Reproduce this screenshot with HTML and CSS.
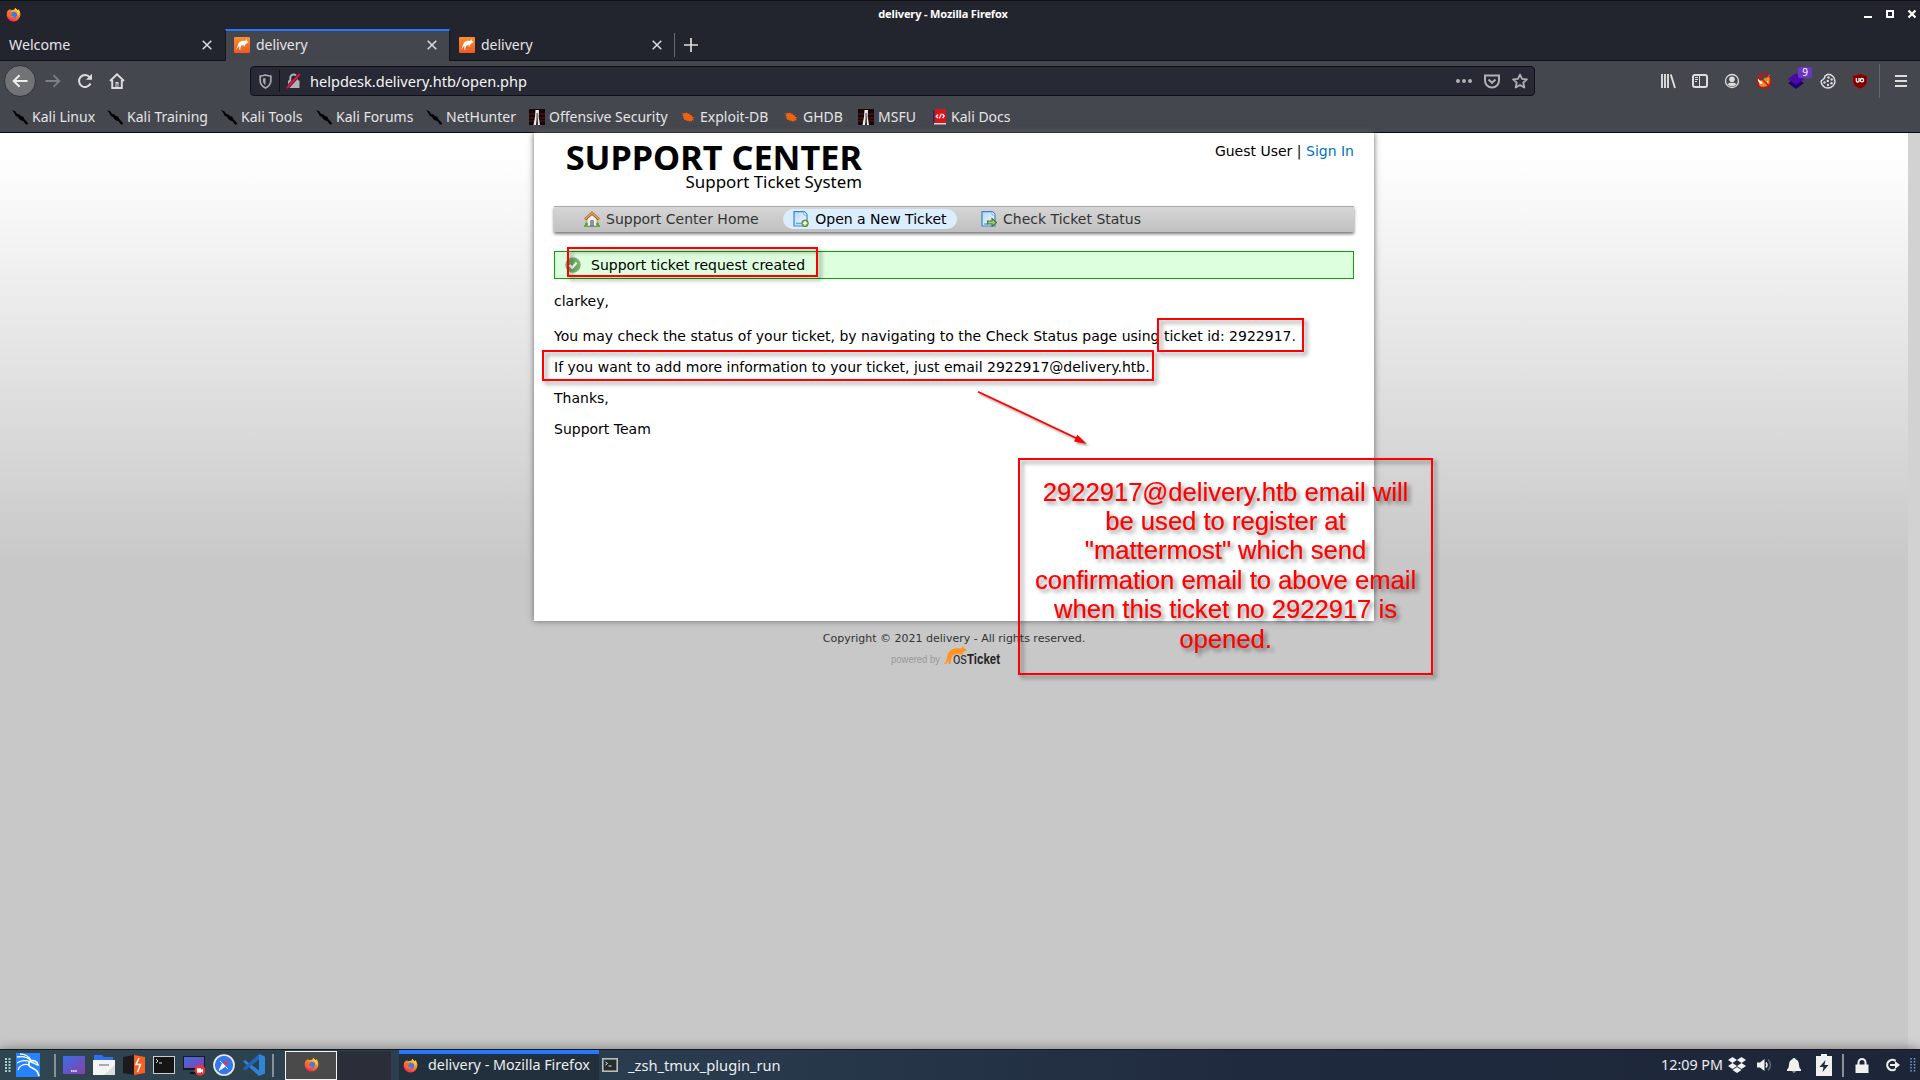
FILE: index.html
```html
<!DOCTYPE html>
<html lang="en">
<head>
<meta charset="utf-8">
<title>delivery - Mozilla Firefox</title>
<link rel="stylesheet" href="styles.css">
</head>
<body>
<svg class="defs" aria-hidden="true">
  <defs>
    <linearGradient id="flame" x1="0.8" y1="0" x2="0.3" y2="1"><stop offset="0" stop-color="#ffe34a"/><stop offset=".45" stop-color="#ff8a25"/><stop offset="1" stop-color="#f5225c"/></linearGradient>
    <linearGradient id="orange" x1="0" y1="0" x2="0" y2="1"><stop offset="0" stop-color="#fb8f2c"/><stop offset="1" stop-color="#ee5a22"/></linearGradient>
    <linearGradient id="desk" x1="0" y1="0" x2="1" y2="1"><stop offset="0" stop-color="#3b6fe4"/><stop offset="1" stop-color="#8a3ea8"/></linearGradient>
    <linearGradient id="sheet" x1="0" y1="0" x2="1" y2="1"><stop offset="0" stop-color="#b5d8f8"/><stop offset="1" stop-color="#f4faff"/></linearGradient>
    <symbol id="firefox" viewBox="0 0 16 16">
      <path d="M8.6 3.2 10 .8c.6 1.4 1.6 2 2.6 3l.6-1.6c1.700 2 2.300 4.100 2.100 6.400A7.300 7.300 0 0 1 .8 9.200C.5 6.800 1.200 4.600 2.600 2.900l.5 1.200L4.300 1.800 5 3.600c1.200-.6 2.400-.7 3.600-.4z" fill="url(#flame)"/>
      <path d="M5 5.600 8.500 5l3 1.200.3 3.200-2 2.300-3 .1-2-2z" fill="#347df0"/>
      <path d="M2.500 5c2-.6 3 .8 5 .8L6 7.600l-1 .3c.6 2 2.600 2.300 4.200 1.200-.6 2.400-4 3.600-6 1.200z" fill="#fb6a2b"/>
      <path d="M9.500.9c.1 2.500 3.800 3.800 2.900 8C15 6.500 14 4 12.600 3.800z" fill="#ffcc3c"/>
    </symbol>
    <symbol id="roo" viewBox="0 0 16 16">
      <rect width="16" height="16" rx="1" fill="url(#orange)"/>
      <path d="M1.600 13.500C3.400 11 3.500 8 5 5.800 6.600 3.900 9 3.500 11 3.900L12.600 2l.3 1.700 1.700 1.600-1.800.7-1.600 1.800-.8 1.700-.9-.2.200-1.400-2.300.6-1.300 3.300 1.100.8-2-.1.200-3.400C4 10 3 12 1.600 13.500z" fill="#fff"/>
    </symbol>
    <symbol id="close" viewBox="0 0 10 10"><path d="M.7.7 9.300 9.300M9.300.7.7 9.300" stroke="#ddd" stroke-width="1.500"/></symbol>
    <symbol id="kali" viewBox="0 0 16 16"><path d="M0 1 3.500 2.500l1.500 2.300 2.600.6 1.200 1.600 2.600.8.800 2.200L16 14l-1 2-1.800-1.200-1.500-2.600-2.500-.6-2-1.500-1.200-2.200L3.800 7 2.500 4.300z" fill="#000"/></symbol>
    <symbol id="offsec" viewBox="0 0 16 16"><rect width="16" height="16" fill="#170606"/><path d="M0 5h16M0 9h16M0 12h16" stroke="#5a1717"/><path d="M6.500 1h3.500l-.3 7 1.300 8H8.800L8.300 7.500 7 16H4.500L6 8z" fill="#eee"/><path d="M7.600 4h1v12h-1z" fill="#333"/></symbol>
    <symbol id="bug" viewBox="0 0 14 14"><path d="M0 3 2.800 3.800 2.900 2.600 4 3.300 6 2.400l.8 1.300 1.700-.3.600 1.600 2 .6.200 1.300L14 7.500l-2.500.7 2 2.200-2.500-.7.300 1.800-1.700-.8-.9 1.100-1-1-2 .2-.5-1.200L3 9.900 3.300 8.700 1.500 7.800 3 6.900 1 5.200l1.500-.1z" fill="#f0620f"/></symbol>
  </defs>
</svg>

<div class="screen">
  <header class="titlebar">
    <svg class="title-fox" width="15" height="15"><use href="#firefox"/></svg>
    <span class="window-title">delivery - Mozilla Firefox</span>
    <svg class="window-buttons" width="52" height="10" viewBox="0 0 52 10"><path d="M0 8h8" stroke="#fff" stroke-width="2"/><path d="M23 2h6v6h-6z" fill="none" stroke="#fff" stroke-width="2"/><path d="m44.500 1.500 7 7M51.500 1.500l-7 7" stroke="#fff" stroke-width="2.200"/></svg>
  </header>

  <nav class="tabs">
    <div class="tab tab-plain"><span>Welcome</span><svg class="x" width="10" height="10"><use href="#close"/></svg></div>
    <div class="tab active"><svg width="16" height="16"><use href="#roo"/></svg><span>delivery</span><svg class="x" width="10" height="10"><use href="#close"/></svg></div>
    <div class="tab"><svg width="16" height="16"><use href="#roo"/></svg><span>delivery</span><svg class="x" width="10" height="10"><use href="#close"/></svg></div>
    <div class="new-tab"><svg width="14" height="14" viewBox="0 0 14 14"><path d="M7 0v14M0 7h14" stroke="#ddd" stroke-width="1.700"/></svg></div>
  </nav>

  <div class="toolbar">
    <div class="back"><svg width="16" height="14" viewBox="0 0 16 14"><path d="M15.500 7H2M7.500 1.200 1.700 7l5.800 5.800" fill="none" stroke="#eee" stroke-width="2"/></svg></div>
    <svg class="forward" width="16" height="14" viewBox="0 0 16 14"><path d="M.5 7H14M8.500 1.200 14.300 7l-5.800 5.800" fill="none" stroke="#7e8086" stroke-width="1.800"/></svg>
    <svg class="reload" width="16" height="16" viewBox="0 0 16 16"><path d="M13.500 10.500A6 6 0 1 1 12.700 4.200" fill="none" stroke="#ddd" stroke-width="2"/><path d="M15 .8v6H9z" fill="#ddd"/></svg>
    <svg class="home" width="16" height="16" viewBox="0 0 16 16"><path d="m1 8 7-6.700L15 8M3.200 7v8h9.600V7" fill="none" stroke="#ddd" stroke-width="1.900"/><path d="M6.500 9h3v6h-3z" fill="#ddd"/><path d="M7.500 10.500h1V14h-1z" fill="#444"/></svg>
    <div class="urlbar">
      <svg class="shield" width="13" height="15" viewBox="0 0 13 15"><path d="M6.500 1C4.500 1.600 3 1.900 1.200 2v4.500c0 4 2.500 6.300 5.300 7.500 2.800-1.200 5.300-3.500 5.300-7.500V2C10 1.900 8.500 1.600 6.500 1z" fill="none" stroke="#a9aab0" stroke-width="1.700"/><path d="M6.500 4v7C4.800 10 4 8.500 4 6.500v-2z" fill="#a9aab0"/></svg>
      <i class="url-rule"></i>
      <svg class="lock" width="15" height="16" viewBox="0 0 15 16"><path d="M2 7.500h11.500V15H2z" fill="#b1b2b7"/><path d="M4.300 8V4.800a3.300 3.300 0 0 1 6.600 0V8" fill="none" stroke="#b1b2b7" stroke-width="1.900"/><path d="M1 15 13.700 1" stroke="#292a35" stroke-width="3.600"/><path d="M1 15 13.700 1" stroke="#f0103c" stroke-width="2"/></svg>
      <span class="url">helpdesk.delivery.htb/open.php</span>
      <svg class="url-dots" width="16" height="4" viewBox="0 0 16 4"><g fill="#b1b1b5"><circle cx="2" cy="2" r="2"/><circle cx="8" cy="2" r="2"/><circle cx="14" cy="2" r="2"/></g></svg>
      <svg width="16" height="15" viewBox="0 0 16 15"><path d="M1 1.500h14v5a7 7 0 0 1-14 0z" fill="none" stroke="#b1b1b5" stroke-width="2"/><path d="m4.500 5.500 3.500 3.300 3.500-3.300" fill="none" stroke="#b1b1b5" stroke-width="2"/></svg>
      <svg width="16" height="16" viewBox="0 0 16 16"><path d="m8 1.500 2 4.400 4.900.5-3.600 3.300 1 4.800L8 12l-4.300 2.500 1-4.800L1.100 6.400 6 5.900z" fill="none" stroke="#b1b1b5" stroke-width="1.800" stroke-linejoin="round"/></svg>
    </div>
    <div class="extensions">
      <svg width="16" height="16" viewBox="0 0 16 16"><path d="M2 1v14M5 1v14M8 1v14M10.800 1.500 15 15" stroke="#ddd" stroke-width="1.900"/></svg>
      <svg width="16" height="16" viewBox="0 0 16 16"><rect x="1" y="2" width="14" height="12" rx="2" fill="none" stroke="#ddd" stroke-width="2"/><path d="M7.500 2v12" stroke="#ddd"/><path d="M3 4.500h3M3 6.500h3M3 8.500h2" stroke="#ddd"/></svg>
      <svg width="16" height="16" viewBox="0 0 16 16"><circle cx="8" cy="8" r="6.500" fill="none" stroke="#ddd" stroke-width="1.300"/><circle cx="8" cy="6.300" r="2.800" fill="#ddd"/><path d="M3.500 11c1.300-1 2-1.300 4.500-1.300s3.200.3 4.500 1.300c-2.200 2.900-6.800 2.900-9 0z" fill="#ddd"/></svg>
      <svg width="16" height="16" viewBox="0 0 16 16"><path d="M3 7.500 7 7l2-2.500 1.500.5L13 2.500l.8 3.500-.3 5-3.500 2.500-5 .5-2-2z" fill="#ee8b1c"/><path d="M1.500 5 4 8l2 1 .5 1.500-2 .5-2.500-3zM12 1.500l2 1-.5 3zM11 8l1.500.5L11 10z" fill="#fff"/><circle cx="8" cy="8" r="7.200" fill="none" stroke="#cc1212" stroke-width="1.400"/><path d="m3 3 10 10" stroke="#cc1212" stroke-width="1.400"/></svg>
      <div class="layers"><svg width="16" height="16" viewBox="0 0 16 16"><path d="m0 10 8 6 8-6-8-5z" fill="#1c0070"/><path d="m0 6 8 6 8-6-8-6z" fill="#4a0aa8"/></svg><span class="badge">9</span></div>
      <svg width="16" height="16" viewBox="0 0 16 16"><path d="M8 1.200A6.900 6.900 0 1 1 1.100 8L3 6.500 4.500 5 5 3z" fill="none" stroke="#ddd" stroke-width="1.500"/><g fill="#ddd"><circle cx="8.500" cy="4.500" r="1.200"/><circle cx="11.700" cy="6.500" r="1.200"/><circle cx="7.800" cy="8" r="1.200"/><circle cx="4.500" cy="9.500" r="1.200"/><circle cx="8" cy="12" r="1.200"/><circle cx="11.500" cy="10.300" r="1.200"/></g></svg>
      <svg width="16" height="16" viewBox="0 0 16 16"><path d="M8 .7C5.500 2 3.500 2.400 1 2.500V8c0 4 3.500 6.500 7 7.700C11.500 14.500 15 12 15 8V2.500C12.500 2.400 10.500 2 8 .7z" fill="#800000" stroke="#a22" stroke-width=".5"/><path d="M4.300 5v2.800a1.300 1.300 0 0 0 2.700 0V5" fill="none" stroke="#fff" stroke-width="1.300"/><circle cx="9.900" cy="7.200" r="1.700" fill="none" stroke="#fff" stroke-width="1.300"/></svg>
    </div>
    <i class="menu-rule"></i>
    <svg class="menu" width="12" height="14" viewBox="0 0 12 14"><path d="M0 2h12M0 7h12M0 12h12" stroke="#ddd" stroke-width="2"/></svg>
  </div>

  <div class="bookmarks">
    <a class="b1"><svg width="16" height="16"><use href="#kali"/></svg>Kali Linux</a>
    <a class="b2"><svg width="16" height="16"><use href="#kali"/></svg>Kali Training</a>
    <a class="b3"><svg width="16" height="16"><use href="#kali"/></svg>Kali Tools</a>
    <a class="b4"><svg width="16" height="16"><use href="#kali"/></svg>Kali Forums</a>
    <a class="b5"><svg width="16" height="16"><use href="#kali"/></svg>NetHunter</a>
    <a class="b6"><svg width="16" height="16"><use href="#offsec"/></svg>Offensive Security</a>
    <a class="b7"><svg width="14" height="14"><use href="#bug"/></svg>Exploit-DB</a>
    <a class="b8"><svg width="14" height="14"><use href="#bug"/></svg>GHDB</a>
    <a class="b9"><svg width="16" height="16"><use href="#offsec"/></svg>MSFU</a>
    <a class="b10"><svg width="13" height="16" viewBox="0 0 13 16"><path d="M0 1h2v14H0z" fill="#1b2c5e"/><path d="M1.500 0H13v14H1.500z" fill="#d8151b"/><path d="M1 14h12v1.500H1z" fill="#ddd"/><path d="M5 5.500 3.200 7.500 5 9M9.500 5l1.800 2-1.800 2M8.300 4.800 6.300 9.500" fill="none" stroke="#fff" stroke-width="1.200"/></svg>Kali Docs</a>
  </div>

  <div class="viewport">
    <main class="page">
      <div class="page-head">
        <div class="brand"><span class="brand-name">SUPPORT CENTER</span><span class="brand-sub">Support Ticket System</span></div>
        <div class="user">Guest User | <a>Sign In</a></div>
      </div>
      <div class="site-nav">
        <span class="item home-item"><svg width="16" height="16" viewBox="0 0 16 16"><path d="M0 14h16v2H0z" fill="#5fae45"/><path d="M3 7.500 8 3l5 4.500V15H3z" fill="#f3f1ea" stroke="#8e8a80" stroke-width=".8"/><path d="M6.500 9.500h3V15h-3z" fill="#8b98a8" stroke="#666" stroke-width=".6"/><path d="m1 8.500 7-6.300 7 6.300" fill="none" stroke="#9a5a25" stroke-width="2.800"/><path d="m1 8.300 7-6.300 7 6.300" fill="none" stroke="#e2a05c" stroke-width="1.500"/><circle cx="2.500" cy="13" r="1.600" fill="#58a83c"/><circle cx="13.500" cy="13" r="1.600" fill="#58a83c"/></svg>Support Center Home</span>
        <span class="item current"><svg width="16" height="16" viewBox="0 0 16 16"><path d="M1 .7h10.500L14 3.500V15H1z" fill="url(#sheet)" stroke="#3d82cf" stroke-width="1.200"/><path d="M11 .7V4h3" fill="#fff" stroke="#6ba4df" stroke-width=".8"/><path d="M3 12.500h5" stroke="#58a8ef" stroke-width="1.500"/><circle cx="12" cy="12.300" r="3.300" fill="#8ab35c" stroke="#527d2d" stroke-width=".9"/><path d="M12 10.300v4M10 12.300h4" stroke="#fff" stroke-width="1.400"/></svg>Open a New Ticket</span>
        <span class="item"><svg width="16" height="16" viewBox="0 0 16 16"><path d="M1 .7h10.500L14 3.500V15H1z" fill="url(#sheet)" stroke="#3d82cf" stroke-width="1.200"/><path d="M11 .7V4h3" fill="#fff" stroke="#6ba4df" stroke-width=".8"/><path d="M3 13h4" stroke="#58a8ef" stroke-width="1.500"/><path d="M6.500 10H11V7.500l4.500 4-4.500 4V13H6.500z" fill="#a1c97a" stroke="#477725" stroke-width="1.100"/></svg>Check Ticket Status</span>
      </div>
      <div class="notice"><svg width="16" height="16" viewBox="0 0 16 16"><circle cx="8" cy="8" r="7" fill="#67b35c" stroke="#8aa884" stroke-width="1.500"/><path d="m4.500 8 2.700 2.800 4.500-5.300" fill="none" stroke="#fff" stroke-width="2.200"/></svg>Support ticket request created</div>
      <div class="message">
        <p class="greeting">clarkey,</p>
        <p>You may check the status of your ticket, by navigating to the Check Status page using ticket id: 2922917.</p>
        <p>If you want to add more information to your ticket, just email 2922917@delivery.htb.</p>
        <p>Thanks,</p>
        <p>Support Team</p>
      </div>
    </main>
    <footer class="page-foot">
      <span class="copyright">Copyright © 2021 delivery - All rights reserved.</span>
      <svg class="powered" width="112" height="22" viewBox="0 0 112 22">
        <text class="pw" x="1" y="18" textLength="49" lengthAdjust="spacingAndGlyphs">powered by</text>
        <path d="M53 19.300C56.500 18 56.500 14 57.500 10.500 58.500 6.500 61.500 3.600 65.500 3.400 68 3.200 70 3.600 71.500 3.200L73 .5l.7 2.500C75 3.500 76 4.500 77 5.600 75.500 6.600 74 6.300 73 7.500L72.500 9.500 70 9.300 67 9C64.500 9 63 10 62 12 61 14 61 16 60.500 19H58.500L59.500 12.500C58.300 16 57.500 19.500 53 19.300z" fill="#ff931d"/>
        <text class="os" x="63" y="19" textLength="14" lengthAdjust="spacingAndGlyphs">os</text>
        <text class="tk" x="77" y="19" textLength="33" lengthAdjust="spacingAndGlyphs">Ticket</text>
      </svg>
    </footer>
    <div class="scrollbar"></div>
  </div>

  <footer class="taskbar">
    <svg class="grip" width="6" height="14" viewBox="0 0 6 14"><path d="M1 0v14M4.500 0v14" stroke="#9fd0d6" stroke-width="2" stroke-dasharray="2 1"/></svg>
    <svg class="kali-menu" width="24" height="24" viewBox="0 0 24 24"><rect width="24" height="24" fill="#2683fb"/><path d="M1 4c6-1 11 0 14 4M1 10c4-3 9-3 14-1 4 1 6 4 8 3M4 1c4 0 9 2 11 6M2 17c1-4 6-7 11-5" fill="none" stroke="#fff" stroke-width="1.300"/><path d="M14 8c-3 5 0 6 4 8 3 1 4 3 5 7M14 8c4-1 7 0 8 4" fill="none" stroke="#fff" stroke-width="1.700"/></svg>
    <i class="sep s1"></i>
    <div class="launchers">
      <svg width="22" height="22" viewBox="0 0 22 22"><path d="M0 2h22v18H0z" fill="url(#desk)"/><path d="M8 17h6" stroke="#fff" stroke-width="1.500" stroke-dasharray="1.500 .6"/></svg>
      <svg width="22" height="22" viewBox="0 0 22 22"><path d="M1 1h8l2 2h9v6H1z" fill="#2e6fea"/><path d="M0 6h22v15H0z" fill="#f4f4f4"/><path d="M6 11h10" stroke="#aaa" stroke-width="2"/><path d="M22 11v10H11z" fill="#ddd"/></svg>
      <svg width="22" height="22" viewBox="0 0 22 22"><path d="m0 3 11-2v20L0 19z" fill="#1b1b1d"/><path d="m11 1 11 2v16l-11 2z" fill="#fb6020"/><path d="m16 4-3 6.500h4.500L14.500 18" fill="none" stroke="#fff" stroke-width="1.500"/></svg>
      <svg width="22" height="22" viewBox="0 0 22 22"><rect x=".5" y="2.500" width="21" height="17" fill="#151515" stroke="#ccc"/><path d="m3 5 2 2-2 2M6 9h3" fill="none" stroke="#ddd"/></svg>
      <svg width="22" height="22" viewBox="0 0 22 22"><path d="M0 2h22v14H0z" fill="#181820"/><path d="M1 3h20v11H1z" fill="url(#desk)"/><path d="M7 18h8v2H7z" fill="#111"/><circle cx="17" cy="16.300" r="5.400" fill="#f43434"/><path d="M14 14.300h4v1.500l2-1v4l-2-1v1h-4z" fill="#fff"/></svg>
      <svg width="22" height="22" viewBox="0 0 22 22"><circle cx="11" cy="11" r="10" fill="#3478ee" stroke="#eee" stroke-width="1.700"/><path d="M16 5.500 9.500 9.300l3 3z" fill="#e53935"/><path d="m6 16.500 3.500-7.200 3 3zM7 7l2 2M13 13l2 2" fill="#fff" stroke="#fff" stroke-width=".8"/></svg>
      <svg width="22" height="22" viewBox="0 0 22 22"><path d="m16 0 6 2.500v17L16 22 0 7.500 2 6l14 10.500z" fill="#2f83db"/><path d="M16 0v5.500L2 16.500 0 14.500z" fill="#2264b9"/></svg>
    </div>
    <i class="sep s2"></i>
    <div class="workspace current-space"><svg width="15" height="15"><use href="#firefox"/></svg></div>
    <div class="workspace other-space"></div>
    <div class="task task-active"><svg width="15" height="15"><use href="#firefox"/></svg><span class="task-name">delivery - Mozilla Firefox</span></div>
    <div class="task"><svg width="16" height="14" viewBox="0 0 16 14"><rect x=".8" y=".8" width="14.400" height="12.400" fill="#252c2d" stroke="#bcbcb8" stroke-width="1.600"/><path d="m3.500 4 2 1.500-2 1.500M6.500 8h3" fill="none" stroke="#eee"/></svg><span>_zsh_tmux_plugin_run</span></div>
    <div class="tray">
      <span class="clock">12:09 PM</span>
      <svg width="18" height="16" viewBox="0 0 18 16"><path d="m4.500 0 4.500 3-4.500 3L0 3zM13.500 0 18 3l-4.500 3L9 3zM4.500 6 9 9l-4.500 3L0 9zM13.500 6 18 9l-4.500 3L9 9zM9 10l4.500 3L9 16l-4.500-3z" fill="#f3f3f3"/></svg>
      <svg class="vol" width="15" height="14" viewBox="0 0 15 14"><path d="M0 4.500h3L7.500 1v12L3 9.500H0z" fill="#f0f0ee"/><path d="M9 4.500q2 2.500 0 5" fill="none" stroke="#eee" stroke-width="1.500"/><path d="M11 1.500q5 5.500 0 11" fill="none" stroke="#5d6571" stroke-width="1.500"/></svg>
      <svg class="bell" width="14" height="15" viewBox="0 0 14 15"><path d="M7 0q1.500 0 1.500 1.300Q12 2.500 12 7q0 3 2 4.500V13H0v-1.500Q2 10 2 7q0-4.500 3.500-5.700Q5.500 0 7 0zM5 13.500h4Q7 15.500 5 13.500z" fill="#f0f0ee"/></svg>
      <svg class="battery" width="16" height="22" viewBox="0 0 16 22"><path d="M5 0h6v2h5v20H0V2h5z" fill="#f0f0ee"/><path d="M9.500 6 3.500 13h4L6.500 18l6-7H8.500z" fill="#202b3d"/></svg>
      <i class="sep s3"></i>
      <svg class="plock" width="14" height="15" viewBox="0 0 14 15"><path d="M.5 6.500h13V15H.5z" fill="#f0f0ee"/><path d="M3.500 7V4.500a3.500 3.500 0 0 1 7 0V7" fill="none" stroke="#f0f0ee" stroke-width="2"/></svg>
      <svg class="logout" width="15" height="14" viewBox="0 0 15 14"><path d="M10.500 2.800a5.200 5.200 0 1 0 0 8.400" fill="none" stroke="#eee" stroke-width="2.200"/><path d="M5 6h5V3l5 4-5 4V8H5z" fill="#eee"/></svg>
      <svg class="grip2" width="6" height="14" viewBox="0 0 6 14"><path d="M1 0v14M4.500 0v14" stroke="#7ea0d0" stroke-width="1.500" stroke-dasharray="1.500 1.500"/></svg>
    </div>
  </footer>

  <div class="mark mark-notice"></div>
  <div class="mark mark-id"></div>
  <div class="mark mark-email"></div>
  <svg class="arrow" width="120" height="66" viewBox="0 0 120 66"><path d="M3 5.700 102 52.500" stroke="#f00" stroke-width="1.800"/><path d="m111.500 57.800-12.500-2.300 3.300-6.800z" fill="#f00"/></svg>
  <div class="mark callout">2922917@delivery.htb email will<br>be used to register at<br>"mattermost" which send<br>confirmation email to above email<br>when this ticket no 2922917 is<br>opened.</div>
</div>
</body>
</html>
```

FILE: styles.css
```css
* { box-sizing: border-box; }
body { margin: 0; background: #c8c8c8; font-family: "Noto Sans", sans-serif; }
svg { display: block; flex: none; }
.defs { position: absolute; width: 0; height: 0; }
.screen { position: relative; width: 1920px; height: 1080px; overflow: hidden; display: flex; flex-direction: column; }

.titlebar { height: 29px; flex: none; display: grid; grid-template-columns: 1fr auto 1fr; align-items: center; padding: 0 4px 2px 6px; background: #23252e; border-top: 1px solid #101116; }
.window-title { color: #fff; font-size: 11px; line-height: 16px; font-weight: 700; letter-spacing: -.14px; margin: 0 35px 0 -1px; }
.window-buttons { justify-self: end; }

.tabs { height: 32px; flex: none; display: flex; background: #23252e; border-bottom: 1px solid #111218; color: #e4e4e6; font-size: 14px; }
.tab { width: 224px; display: flex; align-items: center; padding: 0 12px 0 9px; }
.tab span { margin-left: 6px; padding-bottom: 1px; }
.tab .x { margin-left: auto; }
.tab-plain { width: 225px; padding-left: 3px; padding-right: 13px; font-size: 14.200px; }
.tab.active { width: 225px; height: 32px; background: #44464d; border-top: 2px solid #2777ff; border-left: 1px solid #17181e; border-right: 1px solid #17181e; padding: 0 12px 2px 8px; }
.new-tab { display: flex; align-items: center; padding-left: 9px; margin: 4px 0 3px; border-left: 1px solid #66686f; }

.toolbar { height: 40px; flex: none; display: flex; align-items: center; background: #44474e; padding: 0 13px 0 4px; }
.back { width: 32px; height: 32px; flex: none; border-radius: 50%; background: #727377; border: 1px solid #303238; display: flex; align-items: center; justify-content: center; }
.forward { margin-left: 9px; }
.reload { margin-left: 16px; }
.home { margin-left: 16px; }
.urlbar { margin-left: 125px; width: 1285px; flex: none; height: 30px; display: flex; align-items: center; gap: 12px; padding: 0 6px 0 8px; background: #272934; border: 1px solid #101116; border-radius: 4px; color: #f5f5f7; font-size: 14.550px; }
.url-rule { width: 1px; height: 22px; background: #101116; margin-left: -5px; margin-right: -6px; }
.url { margin-left: -3px; flex: 1; }
.extensions { margin-left: 125px; display: flex; gap: 16px; }
.layers { position: relative; }
.badge { position: absolute; left: 10px; top: -6px; width: 14px; height: 11px; border-radius: 2px; background: #6a36c2; color: #fff; font-size: 10px; line-height: 11px; text-align: center; }
.menu-rule { width: 1px; height: 34px; background: #65676d; margin: 0 15px 0 11px; }

.bookmarks { height: 32px; flex: none; display: flex; align-items: center; background: #44474e; border-bottom: 1px solid #0c0c0f; color: #e4e4e6; font-size: 14px; }
.bookmarks a { display: flex; align-items: center; gap: 4px; white-space: nowrap; line-height: 18px; padding-top: 1px; }
.b1 { width: 95px; margin-left: 12px; }
.b2 { width: 114px; }
.b3 { width: 95px; }
.b4 { width: 110px; }
.b5 { width: 103px; }
.b6 { width: 152px; }
.b7 { width: 103px; }
.b8 { width: 74px; }
.b9 { width: 75px; }
.bookmarks .b7, .bookmarks .b8, .bookmarks .b10 { gap: 5px; }

.viewport { position: relative; flex: 1; min-height: 0; background: linear-gradient(#fff 0, #fff 20px, #c8c8c8 430px); font-family: "DejaVu Sans", sans-serif; }
.page { width: 840px; height: 488px; margin-left: 534px; background: #fff; box-shadow: 0 0 6px #666; padding: 0 20px; font-size: 14px; color: #000; }
.page-head { height: 73px; display: flex; justify-content: space-between; }
.brand { width: 308px; display: flex; flex-direction: column; align-items: flex-end; font-family: "Noto Sans", sans-serif; }
.brand-name { font-size: 34.300px; line-height: 32px; font-weight: 700; margin-top: 8px; white-space: nowrap; }
.brand-sub { font-size: 16.900px; line-height: 18px; }
.user { padding-top: 10px; line-height: 16px; }
.user a { color: #0072bc; }
.site-nav { height: 26px; display: flex; align-items: center; padding: 0 0 1px 20px; color: #333; background: linear-gradient(#d6d6d6, #c0c0c0); border-top: 1px solid #aaa; box-shadow: 0 2px 3px #777; }
.item { display: flex; align-items: center; gap: 6px; height: 20px; padding: 0 10px; border-radius: 10px; white-space: nowrap; }
.item + .item { margin-left: 14.500px; }
.item.current { background: #dbeeff; color: #000; }
.notice { height: 28px; margin-top: 19px; display: flex; align-items: center; gap: 10px; padding-left: 10px; background: #dfd; border: 1px solid #0a0; }
.message { padding-top: 14px; }
.message p { margin: 0 0 15px; line-height: 16px; white-space: nowrap; }
.message .greeting { margin-bottom: 19px; }
.page-foot { width: 840px; margin-left: 534px; display: flex; flex-direction: column; align-items: center; padding-top: 10px; color: #333; font-size: 11px; }
.copyright { line-height: 15px; }
.powered { margin: -1px 16px 0 0; }
.pw { font: 10px "Liberation Sans", sans-serif; fill: #999; }
.os { font: 16px "Liberation Sans", sans-serif; fill: #333; }
.tk { font: bold 14.500px "Liberation Sans", sans-serif; fill: #222; }
.scrollbar { position: absolute; right: 0; top: 0; bottom: 0; width: 12px; background: #d2d2d2; }

.taskbar { height: 31px; flex: none; display: flex; align-items: center; background: linear-gradient(90deg, #2f454f, #293c4e 35%, #202a3e 65%, #1d2639); border-top: 1px solid #15191f; color: #eceef0; font-size: 14.67px; box-shadow: 0 0 12px #777; position: relative; }
.grip { margin-left: 5px; }
.kali-menu { margin-left: 5px; }
.sep { width: 2px; height: 23px; background: #8a9096; }
.s1 { margin-left: 14px; }
.launchers { display: flex; margin-left: 7px; width: 202px; justify-content: space-between; }
.s2 { margin-left: 7px; }
.workspace { height: 29px; }
.current-space { width: 52px; margin-left: 11px; display: flex; align-items: center; justify-content: center; background: #4a4a4a; border: 1px solid #f5f5f5; padding-bottom: 2px; }
.other-space { width: 54px; background: #2b2d39; margin-right: 8px; }
.task { height: 30px; display: flex; align-items: center; padding-left: 3px; gap: 10px; }
.task-active { width: 200px; background: #21303c; border-top: 4px solid #2777ff; padding-bottom: 3px; padding-left: 4px; white-space: nowrap; }
.task-name { font-size: 14.350px; padding-bottom: 2px; }
.tray { margin-left: auto; display: flex; align-items: center; padding-right: 4px; }
.clock { margin-right: 5px; padding-bottom: 2px; font-size: 14.300px; }
.vol { margin-left: 11px; }
.bell { margin-left: 15px; }
.battery { margin-left: 15px; }
.s3 { margin-left: 10px; }
.plock { margin-left: 11px; }
.logout { margin-left: 16px; }
.grip2 { margin-left: 10px; }

.mark { position: absolute; border: 2px solid #f00; filter: drop-shadow(3px 3px 2px rgba(0,0,0,.45)); }
.mark-notice { left: 567px; top: 247px; width: 251px; height: 30px; }
.mark-id { left: 1157px; top: 318px; width: 147px; height: 34px; }
.mark-email { left: 542px; top: 350px; width: 612px; height: 31px; }
.arrow { position: absolute; left: 975px; top: 386px; filter: drop-shadow(2px 2px 1px rgba(0,0,0,.4)); }
.callout { left: 1018px; top: 458px; width: 415px; height: 217px; padding-top: 17.500px; color: #f00; font: 25.600px/29.450px "Liberation Sans", sans-serif; -webkit-text-stroke: .2px #f00; text-align: center; white-space: nowrap; }
```
